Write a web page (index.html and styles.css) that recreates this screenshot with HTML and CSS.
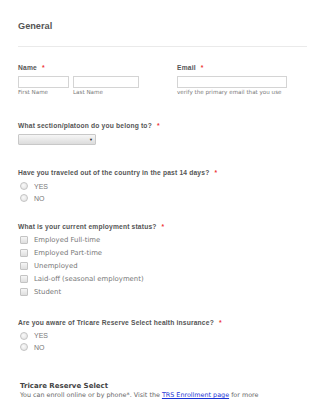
FILE: index.html
```html
<!DOCTYPE html>
<html>
<head>
<meta charset="utf-8">
<link rel="stylesheet" href="styles.css">
</head>
<body>
<div class="page">
  <div class="header">General</div>

  <div class="row-two">
    <div class="field name-field">
      <div class="label">Name <span class="req">*</span></div>
      <div class="inputs">
        <div class="sub">
          <div class="box box-first"></div>
          <div class="sublabel">First Name</div>
        </div>
        <div class="sub">
          <div class="box box-last"></div>
          <div class="sublabel">Last Name</div>
        </div>
      </div>
    </div>
    <div class="field email-field">
      <div class="label">Email <span class="req">*</span></div>
      <div class="sub">
        <div class="box box-email"></div>
        <div class="sublabel">verify the primary email that you use</div>
      </div>
    </div>
  </div>

  <div class="q q-section">
    <div class="label">What section/platoon do you belong to? <span class="req">*</span></div>
    <div class="select"><span class="arrow">&#9660;</span></div>
  </div>

  <div class="q q-travel">
    <div class="label">Have you traveled out of the country in the past 14 days? <span class="req">*</span></div>
    <div class="opts">
      <div class="opt"><span class="radio"></span><span class="opt-text arial">YES</span></div>
      <div class="opt"><span class="radio"></span><span class="opt-text arial">NO</span></div>
    </div>
  </div>

  <div class="q q-emp">
    <div class="label">What is your current employment status? <span class="req">*</span></div>
    <div class="opts checks">
      <div class="opt"><span class="check"></span><span class="opt-text">Employed Full-time</span></div>
      <div class="opt"><span class="check"></span><span class="opt-text">Employed Part-time</span></div>
      <div class="opt"><span class="check"></span><span class="opt-text">Unemployed</span></div>
      <div class="opt"><span class="check"></span><span class="opt-text">Laid-off (seasonal employment)</span></div>
      <div class="opt"><span class="check"></span><span class="opt-text">Student</span></div>
    </div>
  </div>

  <div class="q q-tricare">
    <div class="label">Are you aware of Tricare Reserve Select health insurance? <span class="req">*</span></div>
    <div class="opts">
      <div class="opt"><span class="radio"></span><span class="opt-text arial">YES</span></div>
      <div class="opt"><span class="radio"></span><span class="opt-text arial">NO</span></div>
    </div>
  </div>

  <div class="info">
    <div class="info-title">Tricare Reserve Select</div>
    <div class="info-text">You can enroll online or by phone*. Visit the <a href="#">TRS Enrollment page</a> for more</div>
  </div>
</div>
</body>
</html>
```

FILE: styles.css
```css
html, body {
  margin: 0;
  padding: 0;
  background: #fff;
}
.page {
  padding: 0 18px;
  font-family: "Liberation Sans", Arial, sans-serif;
  color: #555;
}
.header {
  margin-top: 20px;
  font-size: 9.2px;
  line-height: 12px;
  font-weight: bold;
  color: #555;
  padding-bottom: 14px;
  border-bottom: 1px solid #eaeaea;
}
.row-two {
  display: flex;
  margin-top: 16px;
}
.name-field {
  width: 159px;
}
.label {
  font-size: 6.7px;
  line-height: 9px;
  font-weight: bold;
  letter-spacing: 0.17px;
  color: #555;
}
.req {
  color: #e33;
  margin-left: 3px;
}
.inputs {
  display: flex;
  gap: 4px;
  margin-top: 4px;
}
.email-field .sub {
  margin-top: 4px;
}
.box {
  height: 10px;
  border: 1px solid #d4d4d4;
  background: #fff;
}
.box-first { width: 49px; }
.box-last { width: 64px; }
.box-email { width: 108px; }
.sublabel {
  font-family: "DejaVu Sans", Verdana, sans-serif;
  font-size: 5.6px;
  line-height: 7px;
  margin-top: 1px;
  color: #7a7a7a;
}
.q-section {
  margin-top: 25px;
}
.select {
  margin-top: 4px;
  width: 74px;
  height: 9px;
  border: 1px solid #c8c8c8;
  border-radius: 1px;
  background: linear-gradient(#f6f6f6, #dcdcdc);
  display: flex;
  justify-content: flex-end;
  align-items: center;
  padding-right: 2px;
}
.arrow {
  font-size: 4px;
  color: #222;
  line-height: 4px;
}
.q-travel {
  margin-top: 23px;
}
.opts {
  margin-top: 3px;
  padding-left: 2px;
}
.opt {
  display: flex;
  align-items: center;
  height: 12px;
}
.radio {
  width: 6px;
  height: 6px;
  border-radius: 50%;
  border: 1px solid #c4c4c4;
  background: radial-gradient(circle at 40% 40%, #fafafa, #dedede);
  margin-right: 6px;
  flex: none;
}
.check {
  width: 6px;
  height: 6px;
  border-radius: 1px;
  border: 1px solid #c4c4c4;
  background: linear-gradient(#f6f6f6, #dedede);
  margin-right: 6px;
  flex: none;
}
.opt-text {
  font-family: "DejaVu Sans", Verdana, sans-serif;
  font-size: 6.9px;
  color: #777;
}
.opt-text.arial {
  font-family: "Liberation Sans", Arial, sans-serif;
  font-size: 7px;
}
.q-emp {
  margin-top: 18px;
}
.checks {
  margin-top: 2px;
}
.checks .opt {
  height: 13px;
}
.q-tricare {
  margin-top: 20px;
}
.q-tricare .opt {
  height: 11.5px;
}
.info {
  margin-top: 28px;
  padding-left: 2px;
  font-family: "DejaVu Sans", Verdana, sans-serif;
}
.info-title {
  font-size: 7px;
  line-height: 10px;
  font-weight: bold;
  color: #444;
}
.info-text {
  font-size: 6.4px;
  line-height: 9px;
  color: #666;
  white-space: nowrap;
}
.info-text a {
  color: #1a33d6;
  text-decoration: underline;
}
```
